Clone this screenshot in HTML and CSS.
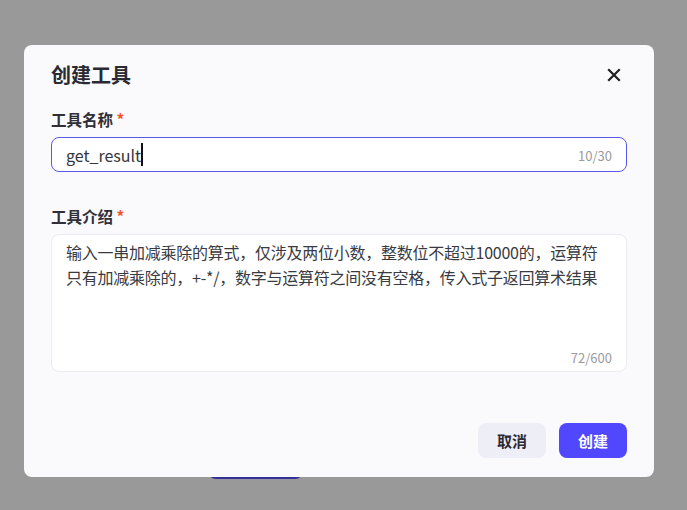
FILE: index.html
```html
<!DOCTYPE html>
<html lang="zh-CN">
<head>
<meta charset="UTF-8" />
<meta name="viewport" content="width=device-width, initial-scale=1" />
<title>创建工具</title>
<link rel="stylesheet" href="styles.css">
</head>
<body>
  <!-- Page behind the dialog -->
  <main class="page">
    <button class="page-btn">新建</button>
  </main>

  <!-- Dialog -->
  <div class="mask">
    <div class="modal" role="dialog" aria-label="创建工具">
      <div class="modal-head">
        <h2>创建工具</h2>
        <button class="close" aria-label="关闭">
          <svg width="14" height="14" viewBox="0 0 14 14"><path d="M2 2L12 12M12 2L2 12" stroke="#1f1f24" stroke-width="2.2" stroke-linecap="square"/></svg>
        </button>
      </div>

      <div class="field">
        <label>工具名称 <span class="req">*</span></label>
        <div class="input focus">
          <span class="value">get_result</span><span class="caret"></span>
          <span class="count">10/30</span>
        </div>
      </div>

      <div class="field field-desc">
        <label>工具介绍 <span class="req">*</span></label>
        <div class="textarea">
          <p>输入一串加减乘除的算式，仅涉及两位小数，整数位不超过10000的，运算符只有加减乘除的，+-*/，数字与运算符之间没有空格，传入式子返回算术结果</p>
          <span class="count">72/600</span>
        </div>
      </div>

      <div class="modal-foot">
        <button class="btn btn-cancel">取消</button>
        <button class="btn btn-ok">创建</button>
      </div>
    </div>
  </div>
</body>
</html>
```

FILE: styles.css
```css
/* --- Reset --- */
* {
  box-sizing: border-box;
  margin: 0;
  padding: 0;
}
html, body {
  height: 100%;
  font-family: "Noto Sans CJK SC", "Noto Sans", sans-serif;
  background: #fff;
  overflow: hidden;
}
button {
  font-family: inherit;
  border: none;
  cursor: pointer;
}

/* --- Page behind --- */
.page {
  padding: 440px 0 0 208px;
}
.page-btn {
  width: 95px;
  height: 39px;
  border-radius: 8px;
  background: #5550ff;
  color: #fff;
}

/* --- Mask + dialog --- */
.mask {
  position: fixed;
  inset: 0;
  background: rgba(0, 0, 0, 0.4);
  padding: 45px 0 0 24px;
}
.modal {
  width: 630px;
  height: 432px;
  background: #fafafd;
  border-radius: 8px;
  padding: 16px 27px 19px;
  display: flex;
  flex-direction: column;
}
.modal-head {
  display: flex;
  align-items: center;
  justify-content: space-between;
  height: 28px;
}
.modal-head h2 {
  font-size: 20px;
  font-weight: 700;
  color: #2a2a33;
  line-height: 28px;
}
.close {
  width: 14px;
  height: 14px;
  background: none;
  margin-right: 6px;
  display: flex;
}

/* --- Fields --- */
.field {
  margin-top: 18px;
}
.field-desc {
  margin-top: 32px;
}
.field label {
  display: block;
  font-size: 15.5px;
  font-weight: 700;
  color: #2f2f3a;
  line-height: 24px;
  margin-bottom: 6px;
}
.req {
  color: #f2522e;
}
.input {
  position: relative;
  height: 35px;
  background: #fff;
  border: 1px solid #e8e8ef;
  border-radius: 8px;
  padding: 0 14px;
  display: flex;
  align-items: center;
  font-size: 16px;
  color: #34343c;
}
.input.focus {
  border-color: #5858ee;
}
.caret {
  display: inline-block;
  width: 2px;
  height: 23px;
  background: #111;
}
.count {
  position: absolute;
  right: 14px;
  font-size: 13px;
  color: #9a9aa2;
}
.input .count {
  top: 50%;
  transform: translateY(-50%);
}
.textarea {
  position: relative;
  height: 138px;
  background: #fff;
  border: 1px solid #ebebf0;
  border-radius: 8px;
  padding: 5px 14px 0;
}
.textarea p {
  font-size: 16px;
  line-height: 25px;
  letter-spacing: -0.25px;
  color: #3a3a42;
}
.textarea .count {
  bottom: 4px;
}

/* --- Footer --- */
.modal-foot {
  margin-top: auto;
  display: flex;
  justify-content: flex-end;
  gap: 13px;
}
.btn {
  width: 68px;
  height: 35px;
  border-radius: 8px;
  font-size: 15px;
  font-weight: 700;
}
.btn-cancel {
  background: #eeeef7;
  color: #2a2a35;
}
.btn-ok {
  background: #5147ff;
  color: #fff;
}
```
